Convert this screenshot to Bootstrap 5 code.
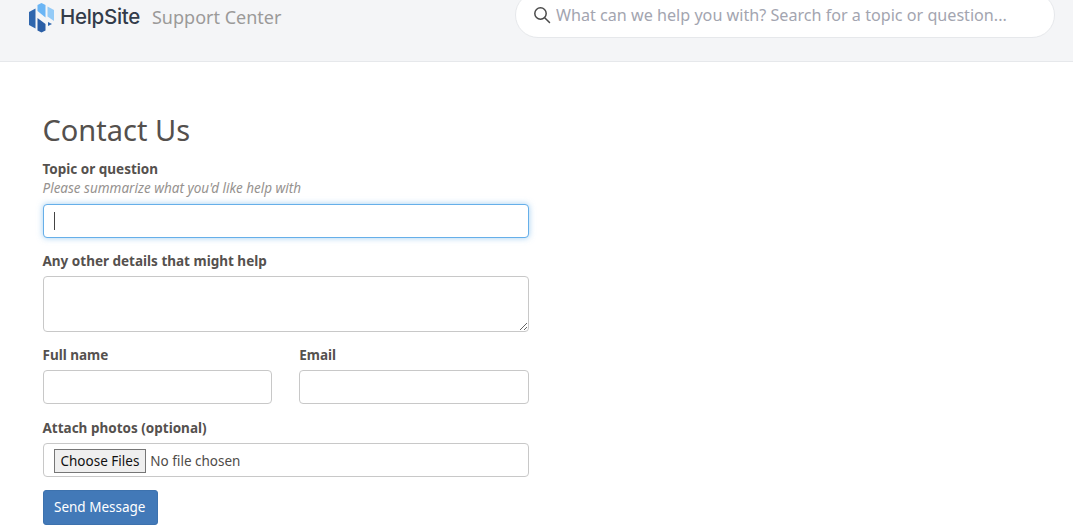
<!DOCTYPE html>
<html lang="en">
<head>
  <meta charset="UTF-8" />
  <title>Contact Us - HelpSite Support Center</title>
  <meta name="viewport" content="width=device-width, initial-scale=1" />
  <link href="https://cdn.jsdelivr.net/npm/bootstrap@5.3.0/dist/css/bootstrap.min.css" rel="stylesheet" />
  <style>
    html, body {
      height: 100%;
      overflow: hidden;
    }

    body {
      font-family: "Noto Sans", sans-serif;
      font-size: 14px;
      color: #4f4b48;
      background: #fff;
    }

    .site-head {
      height: 62px;
      background: #f4f5f7;
      border-bottom: 1px solid #e6e8eb;
      padding: 0 18px 0 29px;
    }

    .logo-name {
      font-family: Inter, "Noto Sans", sans-serif;
      font-size: 20.5px;
      font-weight: 500;
      letter-spacing: -0.3px;
      line-height: 34px;
      color: #333c4a;
      margin-left: 5px;
    }

    .logo-sub {
      font-size: 18px;
      line-height: 34px;
      color: #9b9a99;
      margin-left: 12px;
    }

    .search-pill {
      width: 540px;
      height: 46px;
      margin-top: -8px;
      background: #fff;
      border: 1px solid #e6e8eb;
      border-radius: 23px;
      padding: 0 17px;
      gap: 5px;
    }

    .search-pill input {
      border: 0;
      outline: 0;
      padding: 0;
      flex: 1;
      font-size: 16.15px;
      color: #4f4b48;
      background: transparent;
    }

    .search-pill input::placeholder {
      color: #a3a5b0;
      opacity: 1;
    }

    .page-body {
      padding: 48px 44px 0 42.5px;
      width: 573px;
    }

    .page-title {
      font-size: 29px;
      font-weight: 400;
      line-height: 40px;
      color: #54504d;
      margin-bottom: 9px;
    }

    .field-label {
      display: block;
      font-weight: 700;
      font-size: 13.5px;
      line-height: 20px;
      margin-bottom: 5px;
      color: #55514e;
    }

    .field-hint {
      font-size: 13.5px;
      line-height: 17px;
      font-style: italic;
      color: #96928f;
      margin-top: -4px;
      margin-bottom: 7px;
    }

    .field-gap {
      margin-bottom: 13px;
    }

    .row.field-gap {
      margin-bottom: 14px;
    }

    .field-box.form-control {
      height: 34px;
      padding: 6px 10px;
      font-size: 14px;
      color: #4f4b48;
      border: 1px solid #c8c8c8;
      border-radius: 4px;
      box-shadow: none;
    }

    .field-box.form-control:focus {
      border-color: #66afe9;
      box-shadow: 0 0 6px rgba(102, 175, 233, .6);
      caret-color: transparent;
    }

    .caret-mark {
      position: absolute;
      left: 11px;
      top: 8px;
      width: 1px;
      height: 18px;
      background: #444;
    }

    textarea.field-box.form-control {
      height: 56px;
      min-height: 0;
      display: block;
    }

    .file-box.form-control {
      height: 34px;
      padding: 5px 10px;
      line-height: 22px;
      font-size: 13.5px;
      color: #4f4b48;
    }

    .file-box.form-control::file-selector-button {
      height: 24px;
      margin: 0 4px 0 0;
      padding: 0 6px;
      font-size: 13.5px;
      line-height: 20px;
      color: #111;
      background: #efefef;
      border: 1px solid #767676;
      border-radius: 0;
    }

    .send-btn.btn {
      height: 35px;
      padding: 0 11.5px 0 10.5px;
      font-size: 13.5px;
      color: #fff;
      background: #4279b8;
      border: 1px solid #3d72ae;
      border-radius: 3px;
    }
  </style>
</head>
<body>
  <header class="site-head d-flex justify-content-between align-items-start">
    <div class="d-flex align-items-start">
      <svg width="26" height="34" viewBox="0 0 26 34" xmlns="http://www.w3.org/2000/svg" aria-label="HelpSite logo">
        <path d="M0 12 L6.5 8.5 V28.5 L0 25 Z" fill="#2f66ad"/>
        <path d="M8.5 18 L16.5 24 V30.5 L12.5 32.5 L8.5 30.5 Z" fill="#2a5ea6"/>
        <path d="M8.5 5 L12.5 3 L16.5 5 V17.5 L8.5 11 Z" fill="#6ab5f5"/>
        <path d="M18.5 6.5 L25 10 V21 L18.5 16.5 Z" fill="#94cbf7"/>
        <path d="M19 22 L23 24 L19 26 Z" fill="#2f66ad"/>
      </svg>
      <span class="logo-name">HelpSite</span>
      <span class="logo-sub">Support Center</span>
    </div>
    <div class="search-pill d-flex align-items-center">
      <svg width="18" height="18" viewBox="0 0 18 18" fill="none" stroke="#4a4a4a" stroke-width="1.5" xmlns="http://www.w3.org/2000/svg">
        <circle cx="7.5" cy="7.5" r="5.7"/>
        <path d="M11.7 11.7 L16.5 16.5" stroke-linecap="round"/>
      </svg>
      <input type="text" placeholder="What can we help you with? Search for a topic or question..." />
    </div>
  </header>

  <main class="page-body">
    <h1 class="page-title">Contact Us</h1>
    <form>
      <label class="field-label" for="topic">Topic or question</label>
      <div class="field-hint">Please summarize what you'd like help with</div>
      <div class="position-relative field-gap">
        <input id="topic" class="form-control field-box" type="text" autofocus />
        <span class="caret-mark"></span>
      </div>

      <label class="field-label" for="details">Any other details that might help</label>
      <textarea id="details" class="form-control field-box field-gap"></textarea>

      <div class="row field-gap" style="--bs-gutter-x: 27px">
        <div class="col-6">
          <label class="field-label" for="fullname">Full name</label>
          <input id="fullname" class="form-control field-box" type="text" />
        </div>
        <div class="col-6">
          <label class="field-label" for="email">Email</label>
          <input id="email" class="form-control field-box" type="email" />
        </div>
      </div>

      <label class="field-label" for="photos">Attach photos (optional)</label>
      <input id="photos" class="form-control field-box file-box field-gap" type="file" multiple />

      <button type="button" class="btn send-btn">Send Message</button>
    </form>
  </main>
  <script src="https://cdn.jsdelivr.net/npm/bootstrap@5.3.0/dist/js/bootstrap.bundle.min.js"></script>
</body>
</html>
